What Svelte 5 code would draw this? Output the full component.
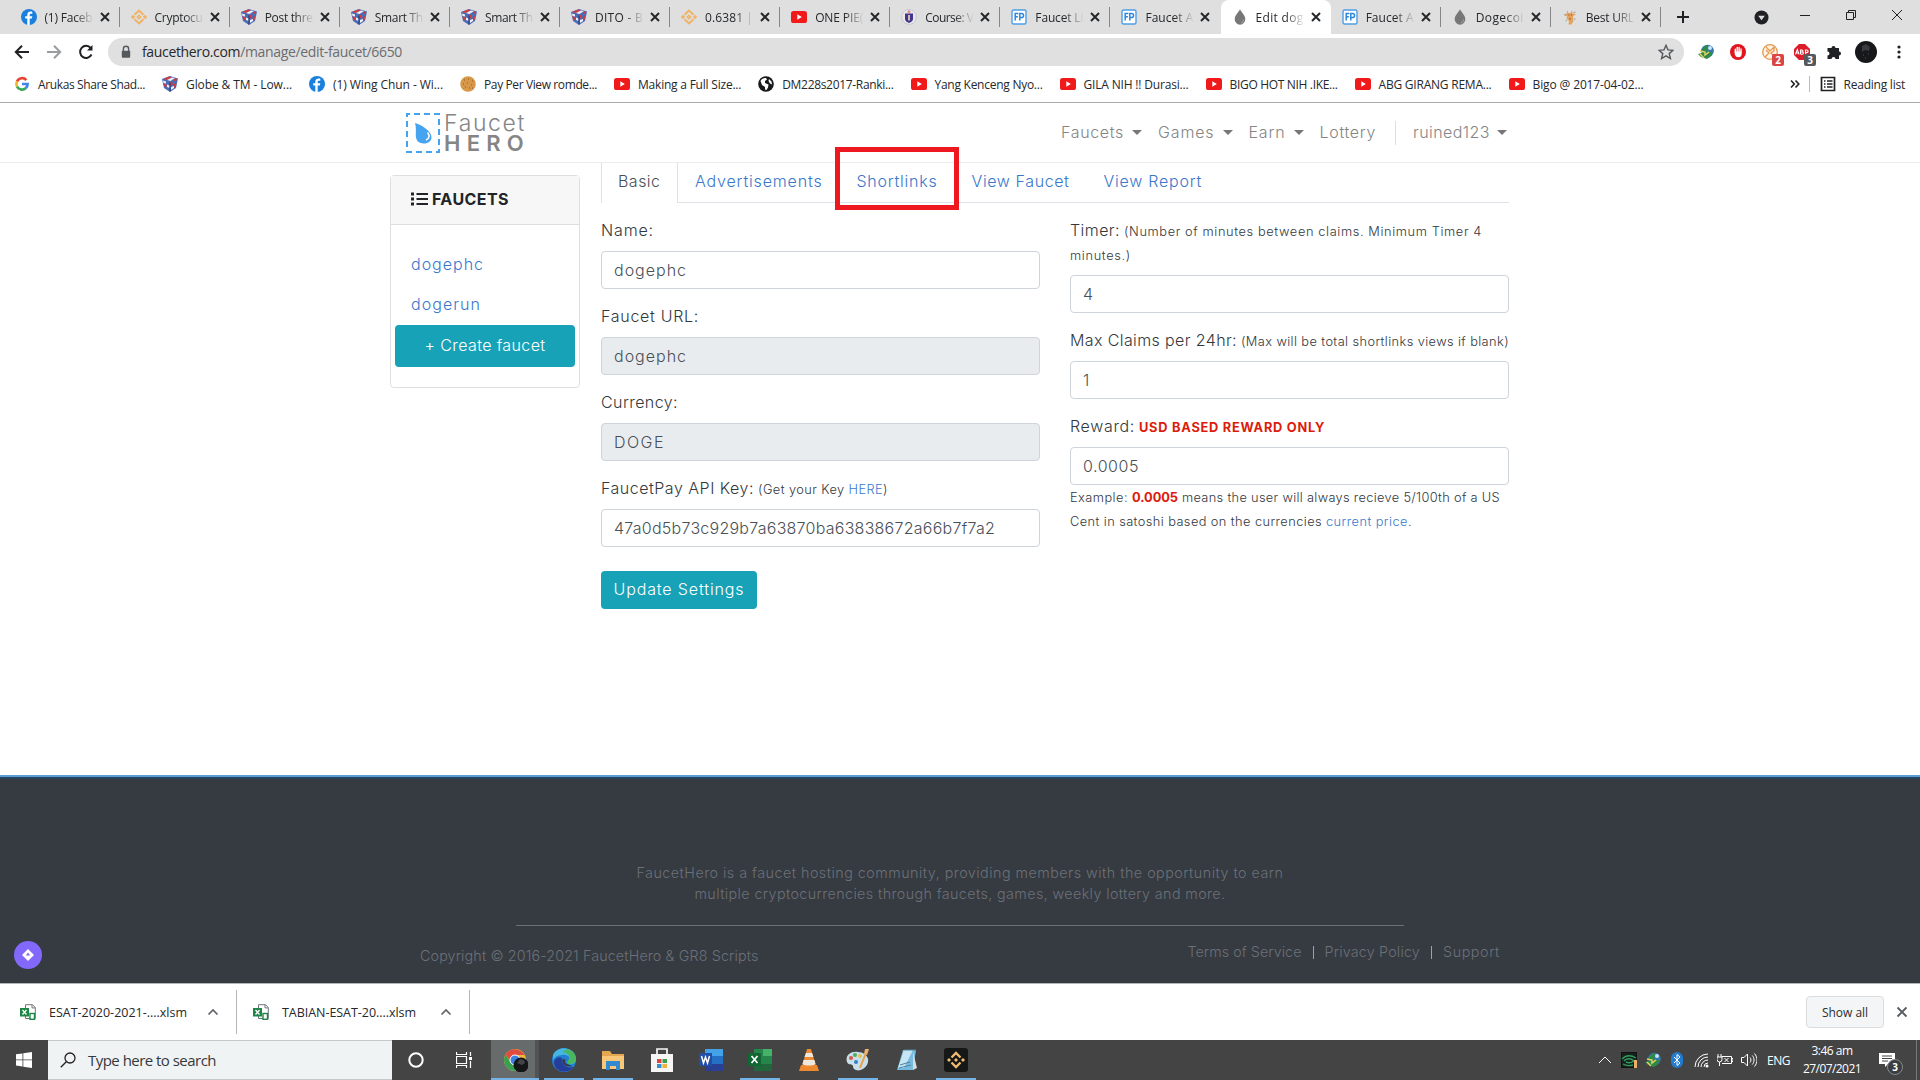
<script>
  const tabs = [
    { icon: 'facebook', title: '(1) Faceb' },
    { icon: 'binance', title: 'Cryptocu' },
    { icon: 'cube', title: 'Post thre' },
    { icon: 'cube', title: 'Smart Th' },
    { icon: 'cube', title: 'Smart Th' },
    { icon: 'cube', title: 'DITO - B' },
    { icon: 'binance', title: '0.6381 |' },
    { icon: 'youtube', title: 'ONE PIE(' },
    { icon: 'school', title: 'Course: V' },
    { icon: 'fp', title: 'Faucet Li' },
    { icon: 'fp', title: 'Faucet A' },
    { icon: 'drop', title: 'Edit dog', active: true },
    { icon: 'fp', title: 'Faucet A' },
    { icon: 'drop', title: 'Dogecoi' },
    { icon: 'giraffe', title: 'Best URL' }
  ];

  const bookmarks = [
    { icon: 'google', title: 'Arukas Share Shad...', width: 107 },
    { icon: 'cube', title: 'Globe & TM - Low...', width: 106 },
    { icon: 'facebook', title: '(1) Wing Chun - Wi...', width: 110 },
    { icon: 'cookie', title: 'Pay Per View romde...', width: 113 },
    { icon: 'youtube', title: 'Making a Full Size...', width: 103.2 },
    { icon: 'globe', title: 'DM228s2017-Ranki...', width: 111.3 },
    { icon: 'youtube', title: 'Yang Kenceng Nyo...', width: 108 },
    { icon: 'youtube', title: 'GILA NIH !! Durasi...', width: 105 },
    { icon: 'youtube', title: 'BIGO HOT NIH .IKE...', width: 108 },
    { icon: 'youtube', title: 'ABG GIRANG REMA...', width: 113 },
    { icon: 'youtube', title: 'Bigo @ 2017-04-02...', width: 111 }
  ];

  const navItems = [
    { label: 'Faucets', width: 63, menu: true },
    { label: 'Games', width: 56.5, menu: true },
    { label: 'Earn', width: 37, menu: true },
    { label: 'Lottery', width: 56.5 }
  ];

  const pageTabs = [
    { label: 'Basic', width: 42.5, active: true },
    { label: 'Advertisements', width: 127.5 },
    { label: 'Shortlinks', width: 81, marked: true },
    { label: 'View Faucet', width: 98 },
    { label: 'View Report', width: 98.5 }
  ];

  const downloads = [
    { name: 'ESAT-2020-2021-....xlsm', width: 138 },
    { name: 'TABIAN-ESAT-20....xlsm', width: 134 }
  ];

  const apps = [
    { icon: 'chrome', open: true, active: true },
    { icon: 'edge', open: true },
    { icon: 'folder', open: true },
    { icon: 'store' },
    { icon: 'word' },
    { icon: 'excel', open: true },
    { icon: 'vlc' },
    { icon: 'paint', open: true },
    { icon: 'notepad' },
    { icon: 'binanceApp', open: true }
  ];

  /**
   * Spread the letters of a text so that it fills the given width
   */
  function fit(node, width) {
    node.style.letterSpacing = '0';
    const natural = node.getBoundingClientRect().width;
    node.style.letterSpacing = (width - natural) / node.textContent.length + 'px';
  }
</script>

{#snippet icon(name)}
  <svg class="icon" viewBox="0 0 16 16">
    {#if name === 'facebook'}
      <circle cx="8" cy="8" r="8" fill="#1b80dd" />
      <path d="M8.700 16V9.600h2.200l.4-2.300H8.700V6c0-.8.4-1.300 1.400-1.300h1.200v-2c-2.800-.5-5 .2-5 3v1.600H4.200v2.300h2.100V16z" fill="#fff" />
    {:else if name === 'binance'}
      <g fill="none" stroke="#efb266" stroke-width="2">
        <path d="M3.500 5.700 8 1.500l4.500 4.200M3.500 10.300 8 14.500l4.500-4.200" />
        <path d="M8 6.300 9.700 8 8 9.700 6.300 8zM2 6.800 3.200 8 2 9.200.8 8zM14 6.800 15.200 8 14 9.200 12.800 8z" stroke-width="1.500" />
      </g>
    {:else if name === 'cube'}
      <path d="m0 3 8-3 8 2.500-2 9.500-6 4-6-4z" fill="#4a6db5" />
      <path d="m1 3 6-2.500 3 1L5 4zM8 6.500l2-1 1 3-3 1.500zM12 8l2.500-1-1 4-2 1zM1.500 7l3 1.500v3L2 10zM12 3l3-.5-.5 2L12 5z" fill="#cf3b45" />
      <path d="m5 4 5-2.500 3 .5-4.500 3zM1 4.500l3 1v2L1.500 7zM9 11l3-1v2l-3 2zM5 8.500l2.500 1v2.500L5 11z" fill="#eef0f6" />
      <path d="M8 6.500v9" stroke="#27366f" />
    {:else if name === 'youtube'}
      <rect y="2" width="16" height="12" rx="2.600" fill="#f01a1a" />
      <path d="m6.300 5.300 4.500 2.700-4.500 2.700z" fill="#fff" />
    {:else if name === 'school'}
      <circle cx="8" cy="8" r="7.300" fill="#e8e8ec" stroke="#b5b6c8" stroke-dasharray="1.500 1" />
      <path d="M4 4.500h8V10c0 2-2 3-4 4-2-1-4-2-4-4z" fill="#40388f" />
      <path d="M7 6h2v5.500H7z" fill="#d9b9ac" />
      <circle cx="8" cy="2.800" r="1.500" fill="#e08c8c" />
    {:else if name === 'fp'}
      <rect x="1" y="1" width="14" height="14" rx="1.500" fill="#fff" stroke="#4d9ee5" stroke-width="1.400" />
      <path d="M4.200 11.500v-7h3.200M4.200 7.800h2.700M8.800 11.500v-7h1.700a2 2 0 0 1 0 4.100H8.800" fill="none" stroke="#2d87dc" stroke-width="1.500" />
    {:else if name === 'drop'}
      <path d="M8 .3c1 2.500 5.300 6 5.300 10A5.300 5.300 0 0 1 8 15.700a5.300 5.300 0 0 1-5.300-5.400C2.700 6.300 7 2.800 8 .3z" fill="#777" />
      <path d="M11.500 10.500c0 2-1 3-2.500 3.500" fill="none" stroke="#aaa" />
    {:else if name === 'giraffe'}
      <path d="m5 1 1.500 3h2L10 1l.5 3.500L14 5l-3 2.500.5 4.500-2 3.500H6.500L7 12 4.500 9.500 5 7.500 2.500 5 5 4.500z" fill="#e5a25c" />
      <path d="m2 5.500 2 1M11.500 3.500l2-.500M5 11l-1.500 1M12 10h1.500" stroke="#879da2" />
      <path d="M6.500 6h1M9 6h1M8 9v1.500" stroke="#76533a" />
    {:else if name === 'google'}
      <g fill="none" stroke-width="2.700">
        <path d="M12.300 4.100A5.600 5.600 0 0 0 3 5.500" stroke="#e64435" />
        <path d="M3 5.500a5.600 5.600 0 0 0 0 5" stroke="#f3b61f" />
        <path d="M3 10.500a5.600 5.600 0 0 0 8.700 1.800" stroke="#35a853" />
        <path d="M11.700 12.300A5.600 5.600 0 0 0 13.600 8H8" stroke="#4285e8" />
      </g>
    {:else if name === 'cookie'}
      <circle cx="8" cy="8" r="7.800" fill="#d89849" />
      <path d="M4 4h1M8 3h1M12 5h1M3 8h1M7 7h1M11 9h1M5 11h1M9 12h1M12 12h1" stroke="#8f5a21" stroke-width="1.200" />
    {:else if name === 'globe'}
      <circle cx="8" cy="8" r="7.800" fill="#18191b" />
      <path d="M2.500 5C4 2.500 6.500 1.500 8 2l1 1.500-2 1.500 0 2 3.500 1.500-.5 3L8.500 14 7 13.500 7 11 4 9zM11 3l2.500 2.500.5 3L12 7.500 10.500 5z" fill="#fff" />
    {:else if name === 'idm'}
      <circle cx="9.500" cy="7" r="6.300" fill="#3876a9" />
      <path d="m3 6 6-5 2 3-3 2 3 2h4l-3 5-3 2-6-2-3-3 4-1z" fill="#2d8b45" />
      <path d="m2 7 5 1v3l4-3M2 10l4 4" fill="none" stroke="#ead16d" stroke-width="1.400" />
      <circle cx="12" cy="4" r="2" fill="#c6e6ff" />
    {:else if name === 'hand'}
      <circle cx="8" cy="8" r="8" fill="#e01520" />
      <path d="M5.300 8V5.300M7.200 8V3.500M9.100 8V3.500M11 8V5" stroke="#fff" stroke-width="1.400" stroke-linecap="round" />
      <path d="M4.600 7.500h7.100V10c0 2-1.200 3.300-3.300 3.300-2.600 0-3.800-2.300-3.800-4.300z" fill="#fff" />
    {:else if name === 'moneta'}
      <circle cx="8" cy="8" r="7.300" fill="#fff5e9" stroke="#e9964b" stroke-width="1.300" />
      <path d="m4 3 4 4 4-4v4l-3 2 4 4M3 13l4-4-3-3" fill="none" stroke="#e9964b" stroke-width="1.300" />
    {:else if name === 'abp'}
      <path d="M5 0h6l5 5v6l-5 5H5l-5-5V5z" fill="#dd1c2b" />
      <path d="m1.500 10.500 1.800-5 1.800 5M2.200 9h2.400M6.500 10V6h1.500a1 1 0 0 1 0 2H6.500h1.800a1 1 0 0 1 0 2.200H6.500M11.500 10.500V6h1.300a1.300 1.300 0 0 1 0 2.600h-1.300" fill="none" stroke="#fff" stroke-width="1.100" />
    {:else if name === 'puzzle'}
      <path d="M1.500 4h4a2 2 0 1 1 4 0H13v3.500a2 2 0 1 1 0 4V15H9.500a2 2 0 0 0-4 0h-4v-3.500a2 2 0 0 0 0-4z" fill="#202124" />
    {:else if name === 'star'}
      <path d="m8 1.300 2 4.600 5 .4-3.800 3.300 1.200 4.900L8 11.900l-4.400 2.600 1.200-4.900L1 6.300l5-.4z" fill="none" stroke="#55585c" stroke-width="1.400" />
    {:else if name === 'lock'}
      <path d="M5 7V4.500a3 3 0 0 1 6 0V7" fill="none" stroke="#55585c" stroke-width="1.600" />
      <rect x="3.200" y="6.500" width="9.600" height="8" rx="1" fill="#55585c" />
    {:else if name === 'close'}
      <path d="m4 4 8 8m0-8-8 8" stroke="#25282b" stroke-width="2" />
    {:else if name === 'xlsm'}
      <path d="M5.500.7h7l2.800 2.800v11H5.500z" fill="#fff" stroke="#71767a" />
      <path d="M12 .7v3.200h3" fill="none" stroke="#71767a" />
      <rect y="4" width="9" height="8.500" fill="#1d8545" />
      <path d="m2.500 6 4 4.500m0-4.500-4 4.500" stroke="#fff" stroke-width="1.300" />
      <rect x="10" y="9.500" width="4.500" height="5.800" fill="#fff" stroke="#1d8545" stroke-width="1.400" />
    {/if}
  </svg>
{/snippet}

{#snippet appIcon(name)}
  <svg class="app-icon" viewBox="0 0 24 24">
    {#if name === 'chrome'}
      <circle cx="11" cy="12" r="11" fill="#f1b83b" />
      <path d="M1.500 6.500A11 11 0 0 1 20.500 7H11L7 14z" fill="#e04a3f" />
      <path d="M1.500 6.500A11 11 0 0 0 11 23l4.500-8H7z" fill="#36a151" />
      <circle cx="11" cy="12" r="5" fill="#3b80e2" stroke="#fff" />
      <circle cx="17" cy="17" r="7.500" fill="#151617" />
      <path d="m13 15 3-4 4 1 1 3-3 2z" fill="#414548" />
    {:else if name === 'edge'}
      <circle cx="12" cy="12" r="12" fill="#247fd2" />
      <path d="M1 7C5-3 23-2 24 11c0 5-5 7-9 4 6-4 1-9-5-8-5 0-8 3-9 5z" fill="#45b6df" />
      <path d="M16 1c8 3 10 10 6 14-3 2-7 1-7-1 4-4 3-9-5-10z" fill="#49b760" />
      <path d="M10 10c-1 5 3 11 12 9-7 8-20 5-20-5 1-4 5-6 8-4z" fill="#263d9b" />
      <path d="M10.500 11c-1 4 2 7.500 8 7.500 3 0 1-1-1-1.500-4-1-5.500-3-4-5.500z" fill="#373942" />
    {:else if name === 'folder'}
      <path d="M1 3h8l2 3h12v15H1z" fill="#e4a64e" />
      <path d="M1 8h22v13H1z" fill="#f8c878" />
      <path d="M5 13h14v9h-4v-4H9v4H5z" fill="#3389d0" />
    {:else if name === 'store'}
      <path d="M7 8V1h10v7" fill="none" stroke="#f7f7f7" stroke-width="1.700" />
      <path d="M1 6h22v18H1z" fill="#f5f5f5" />
      <path d="M7 11h4.500v4H7z" fill="#df4540" /><path d="M12.500 11H17v4h-4.500z" fill="#3f9e4c" />
      <path d="M7 16h4.500v4H7z" fill="#3392ce" /><path d="M12.500 16H17v4h-4.500z" fill="#efb23e" />
    {:else if name === 'word'}
      <path d="M6 1h18v7H6z" fill="#43a2e8" /><path d="M6 8h18v8H6z" fill="#2470c5" /><path d="M6 16h18v7H6z" fill="#293f93" />
      <path d="M0 5h13v13H0z" fill="#234ea6" />
      <path d="m2.500 8 2 7 2-6 2 6 2-7" fill="none" stroke="#fff" stroke-width="1.500" />
    {:else if name === 'excel'}
      <path d="M6 1h18v22H6z" fill="#26854a" /><path d="M15 1h9v7h-9z" fill="#45b268" /><path d="M6 16h18v7H6z" fill="#20673c" />
      <path d="M0 5h13v13H0z" fill="#126632" />
      <path d="m3.500 8 6 7m0-7-6 7" stroke="#fff" stroke-width="1.700" />
    {:else if name === 'vlc'}
      <path d="m4 17-2 6h20l-2-6z" fill="#ed892e" />
      <path d="M10 1h4l5 17c-3 2-11 2-14 0z" fill="#ef8b32" />
      <path d="M9 5h6l1.500 4h-9zM6.500 12h11l1 4c-3 2-10 2-13 0z" fill="#eee8df" />
    {:else if name === 'paint'}
      <path d="M12 4C4 3-1 8 1 14c2 4 5 1 6 4 0 6 10 6 14-1 4-8-3-13-9-13z" fill="#c9dfea" />
      <circle cx="5" cy="10" r="2" fill="#d65846" /><circle cx="9" cy="7" r="2" fill="#4cae68" /><circle cx="14" cy="8" r="2" fill="#e8bf4b" /><circle cx="10" cy="14" r="2" fill="#397fc2" />
      <path d="m20 5-6 15" stroke="#e4a14e" stroke-width="2" /><path d="M19 1h4l-2 6-3-1z" fill="#edb16c" />
    {:else if name === 'notepad'}
      <path d="M8 2h13l-3 20H2z" fill="#79bbdf" /><path d="M9 2h9L9 20H3z" fill="#c7e6f3" />
      <path d="m18 4 4 16-4 2" fill="#d9dadb" /><path d="M9 2h12M5 17l10-3M4 20l12-3" stroke="#4b829e" />
    {:else if name === 'binanceApp'}
      <rect width="24" height="24" rx="3" fill="#161817" />
      <path d="m7.500 9.500 4.500-4.500 4.500 4.500M7.500 14.500 12 19l4.500-4.500" fill="none" stroke="#f3bc70" stroke-width="2.300" />
      <path d="m12 10 2 2-2 2-2-2zM5 10l2 2-2 2-2-2zM19 10l2 2-2 2-2-2z" fill="#f3bc70" />
    {/if}
  </svg>
{/snippet}

<div class="screen">
  <div class="tab-strip">
    {#each tabs as tab}
      <div class="tab" class:active={tab.active}>
        {@render icon(tab.icon)}
        <span class="tab-title"><span use:fit={48}>{tab.title}</span></span>
        {@render icon('close')}
      </div>
    {/each}
    <svg class="new-tab" viewBox="0 0 16 16"><path d="M8 2v12M2 8h12" stroke="#202124" stroke-width="2" /></svg>
    <svg class="tab-search" viewBox="0 0 16 16"><circle cx="8" cy="8" r="7.500" fill="#202124" /><path d="M4.500 6h7L8 11z" fill="#ddd" /></svg>
    <div class="window-controls">
      <svg viewBox="0 0 12 12"><path d="M1 6.500h10" /></svg>
      <svg viewBox="0 0 12 12"><path d="M1.500 3.500h7v7h-7zM3.500 3.500v-2h7v7h-2" /></svg>
      <svg viewBox="0 0 12 12"><path d="m1 1 10 10m0-10L1 11" /></svg>
    </div>
  </div>

  <div class="toolbar">
    <div class="history">
      <svg viewBox="0 0 16 16"><path d="M15 8H2m6-6.200L1.800 8 8 14.200" stroke="#202124" /></svg>
      <svg viewBox="0 0 16 16"><path d="M1 8h13M8 1.800 14.200 8 8 14.200" stroke="#9a9da0" /></svg>
      <svg viewBox="0 0 16 16"><path d="M13.500 10.500A6 6 0 1 1 12.700 4" stroke="#202124" /><path d="M14.500 1v5.500H9z" fill="#202124" stroke="none" /></svg>
    </div>
    <div class="address">
      {@render icon('lock')}
      <span class="url" use:fit={260}>faucethero.com<span class="path">/manage/edit-faucet/6650</span></span>
      {@render icon('star')}
    </div>
    <div class="extensions">
      {@render icon('idm')}
      {@render icon('hand')}
      <span class="ext">{@render icon('moneta')}<b class="badge red">2</b></span>
      <span class="ext">{@render icon('abp')}<b class="badge">3</b></span>
      {@render icon('puzzle')}
    </div>
    <svg class="avatar" viewBox="0 0 22 22"><circle cx="11" cy="11" r="11" fill="#17181a" /><path d="m7 5 4-2 4 3-1 4-4-1-3 2z" fill="#393b3e" /><path d="M8 14h1m4-1h1m-4 4h1" stroke="#4e5154" /></svg>
    <svg class="dots" viewBox="0 0 4 16"><circle cx="2" cy="3" r="1.600" /><circle cx="2" cy="8" r="1.600" /><circle cx="2" cy="13" r="1.600" /></svg>
  </div>

  <div class="bookmarks">
    {#each bookmarks as bookmark}
      <div class="bookmark">
        {@render icon(bookmark.icon)}
        <span use:fit={bookmark.width}>{bookmark.title}</span>
      </div>
    {/each}
    <div class="reading">
      <svg class="more" viewBox="0 0 10 10"><path d="m1 1.500 3.300 3.500L1 8.500m4.500-7L8.800 5 5.500 8.500" /></svg>
      <i></i>
      <svg class="list" viewBox="0 0 16 16"><path d="M1.500 1.500h13v13h-13zM4 5h1.500M7 5h5.500M4 8h1.500M7 8h5.500M4 11h1.500M7 11h5.500" /></svg>
      <span use:fit={61.5}>Reading list</span>
    </div>
  </div>

  <main>
    <header>
      <div class="logo">
        <svg viewBox="0 0 34 40">
          <rect x="1" y="1" width="32" height="38" fill="none" stroke="#46a3f0" stroke-width="2" stroke-dasharray="6 4" stroke-dashoffset="3" />
          <path d="M9 10c5 1 17 8 16.500 14.500-.3 3.500-3 6-7.500 6-6 0-8.500-4-8.200-9C10 17 10 13 9 10z" fill="#46a3f0" />
          <path d="M21.500 19.500c2.500 3 2 6-1.500 7.500" fill="none" stroke="#fff" stroke-width="1.500" />
        </svg>
        <div class="wordmark">
          <span use:fit={82}>Faucet</span>
          <b use:fit={86}>HERO</b>
        </div>
      </div>
      <nav>
        {#each navItems as item}
          <div class="nav-item">
            <span use:fit={item.width}>{item.label}</span>
            {#if item.menu}<i class="caret"></i>{/if}
          </div>
        {/each}
        <div class="nav-item user">
          <span use:fit={77}>ruined123</span>
          <i class="caret"></i>
        </div>
      </nav>
    </header>

    <div class="content">
      <aside>
        <div class="card-header">
          <svg viewBox="0 0 17 14"><path d="M5.500 2H17M5.500 7H17M5.500 12H17" stroke="#212529" stroke-width="2" /><path d="M0 2h3M0 7h3M0 12h3" stroke="#212529" stroke-width="3" /></svg>
          <b use:fit={77}>FAUCETS</b>
        </div>
        <div class="card-body">
          <a href="#dogephc"><span use:fit={73}>dogephc</span></a>
          <a href="#dogerun"><span use:fit={70}>dogerun</span></a>
          <button class="create"><span use:fit={121}>+ Create faucet</span></button>
        </div>
      </aside>

      <section>
        <div class="page-tabs">
          {#each pageTabs as tab}
            <div class="page-tab" class:active={tab.active} class:marked={tab.marked}>
              <span use:fit={tab.width}>{tab.label}</span>
            </div>
          {/each}
        </div>

        <div class="form">
          <div class="column">
            <div class="group">
              <div class="label"><span use:fit={53}>Name:</span></div>
              <div class="input"><span use:fit={73}>dogephc</span></div>
            </div>
            <div class="group">
              <div class="label"><span use:fit={98}>Faucet URL:</span></div>
              <div class="input disabled"><span use:fit={73}>dogephc</span></div>
            </div>
            <div class="group">
              <div class="label"><span use:fit={77}>Currency:</span></div>
              <div class="input disabled"><span use:fit={51}>DOGE</span></div>
            </div>
            <div class="group">
              <div class="label">
                <span use:fit={153}>FaucetPay API Key:</span>
                <small use:fit={130}>(Get your Key <a href="#key">HERE</a>)</small>
              </div>
              <div class="input"><span use:fit={381}>47a0d5b73c929b7a63870ba63838672a66b7f7a2</span></div>
            </div>
            <button class="update"><span use:fit={131}>Update Settings</span></button>
          </div>

          <div class="column">
            <div class="group">
              <div class="label">
                <span use:fit={50}>Timer:</span>
                <small use:fit={358}>(Number of minutes between claims. Minimum Timer 4</small>
              </div>
              <div class="label second"><small use:fit={61}>minutes.)</small></div>
              <div class="input"><span>4</span></div>
            </div>
            <div class="group">
              <div class="label">
                <span use:fit={167}>Max Claims per 24hr:</span>
                <small use:fit={268}>(Max will be total shortlinks views if blank)</small>
              </div>
              <div class="input"><span>1</span></div>
            </div>
            <div class="group">
              <div class="label">
                <span use:fit={65}>Reward:</span>
                <small class="warn" use:fit={186}>USD BASED REWARD ONLY</small>
              </div>
              <div class="input"><span use:fit={56}>0.0005</span></div>
              <div class="hint">
                <span use:fit={58}>Example:</span>
                <b class="warn" use:fit={46}>0.0005</b>
                <span use:fit={318}>means the user will always recieve 5/100th of a US</span>
              </div>
              <div class="hint">
                <span use:fit={252}>Cent in satoshi based on the currencies</span>
                <span use:fit={86}><a href="#price">current price</a>.</span>
              </div>
            </div>
          </div>
        </div>
      </section>
    </div>

    <footer>
      <div class="about">
        <span use:fit={647}>FaucetHero is a faucet hosting community, providing members with the opportunity to earn</span>
        <span use:fit={531}>multiple cryptocurrencies through faucets, games, weekly lottery and more.</span>
      </div>
      <hr />
      <div class="legal">
        <span class="copyright" use:fit={338.5}>Copyright © 2016-2021 FaucetHero &amp; GR8 Scripts</span>
        <div class="links">
          <span use:fit={114}>Terms of Service</span>
          <i></i>
          <span use:fit={95.5}>Privacy Policy</span>
          <i></i>
          <span use:fit={57}>Support</span>
        </div>
      </div>
      <svg class="widget" viewBox="0 0 28 28"><circle cx="14" cy="14" r="14" fill="#8268fb" /><path d="m14 8 6 6-6 6-6-6z" fill="#fff" /><path d="m14 11.500 2.200 3h-4.400z" fill="#8268fb" /></svg>
    </footer>
  </main>

  <div class="downloads">
    {#each downloads as file}
      <div class="download">
        {@render icon('xlsm')}
        <span use:fit={file.width}>{file.name}</span>
        <svg class="chevron" viewBox="0 0 12 8"><path d="m1.500 6.500 4.500-4.500 4.500 4.500" /></svg>
      </div>
    {/each}
    <button class="show-all"><span use:fit={46}>Show all</span></button>
    <svg class="dismiss" viewBox="0 0 12 12"><path d="m1.500 1.500 9 9m0-9-9 9" /></svg>
  </div>

  <div class="taskbar">
    <svg class="start" viewBox="0 0 16 16"><path d="m0 2.300 6.500-.9v6.100H0zM7.300 1.300 16 0v7.500H7.300zM0 8.300h6.500v6.200L0 13.600zM7.300 8.300H16V16l-8.700-1.300z" fill="#fff" /></svg>
    <div class="search">
      <svg viewBox="0 0 16 16"><circle cx="10" cy="6" r="5" /><path d="M6.500 9.500.8 15.200" /></svg>
      <span use:fit={128}>Type here to search</span>
    </div>
    <svg class="cortana" viewBox="0 0 16 16"><circle cx="8" cy="8" r="6.700" /></svg>
    <svg class="task-view" viewBox="0 0 16 16"><path d="M.5 0v2.500h10V0M.5 16v-2.500h10V16M.5 4.500h10v7H.5zM14.500 0v4M14.500 9v7" /><path d="M13 5h3v3h-3z" fill="#fff" stroke="none" /></svg>
    <div class="apps">
      {#each apps as app}
        <div class="app" class:open={app.open} class:current={app.active}>
          {@render appIcon(app.icon)}
        </div>
      {/each}
    </div>
    <div class="tray">
      <svg viewBox="0 0 16 16"><path d="m2 11 6-6 6 6" /></svg>
      <svg viewBox="0 0 16 16"><rect x=".5" y=".5" width="15" height="15" fill="#17201c" stroke="#111" /><path d="M1 7c4-4 9-4 14-1M3 9c2-3 7-3 10 0-3 2-6 2-8 1M2 12c3 2 6 2 10 1" stroke="#309b5d" stroke-width="1.400" /><path d="M13 8h3v8h-3z" fill="#edae6e" stroke="none" /></svg>
      {@render icon('idm')}
      <svg viewBox="0 0 16 16"><rect x="2" width="12" height="16" rx="6" fill="#217bd1" stroke="none" /><path d="m5 5 6 6-3 2.500v-11L11 5l-6 6" /></svg>
      <svg viewBox="0 0 16 16"><path d="M2 15A13 13 0 0 1 15 2M5 15A10 10 0 0 1 15 5M8 15a7 7 0 0 1 7-7M11 15a4 4 0 0 1 4-4" /><circle cx="14" cy="14" r="1.500" fill="#fff" stroke="none" /></svg>
      <svg viewBox="0 0 16 16"><path d="M5 4.500h9.500v7H5M14.500 6.500h1.500v3h-1.500M7.500 6l4 4m0-4-4 4M1 2v3m3-3v3M0 5h5v2.500a2.500 2.500 0 0 1-5 0zM2.500 10v4" /></svg>
      <svg viewBox="0 0 16 16"><path d="M.5 5.500H3L6.500 2v12L3 10.500H.5zM9 5.500c1.300 1.500 1.300 3.500 0 5M11.300 3.500c2.300 2.600 2.300 6.400 0 9M13.500 1.500c3.300 4 3.300 9 0 13" /></svg>
      <span class="lang" use:fit={23}>ENG</span>
      <div class="clock">
        <span use:fit={41}>3:46 am</span>
        <span use:fit={58}>27/07/2021</span>
      </div>
      <div class="notifications">
        <svg viewBox="0 0 16 16"><path d="M0 1h16v11H9l-3 3v-3H0z" fill="#fff" stroke="none" /><path d="M3 4h10M3 6.500h10M3 9h6" stroke="#434443" /></svg>
        <b>3</b>
      </div>
      <i class="peek"></i>
    </div>
  </div>
</div>

<style>
  .screen {
    display: flex;
    flex-direction: column;
    width: 1920px;
    height: 1080px;
    overflow: hidden;
    background: #fff;
    color: #26282b;
    font-family: "Open Sans", "Noto Sans", sans-serif;
    font-size: 12px;
    white-space: nowrap;
  }

  .screen *,
  .screen *::after,
  .screen {
    box-sizing: border-box;
  }

  svg {
    display: block;
    flex: none;
    fill: none;
  }

  a {
    color: #3977cb;
    text-decoration: none;
  }

  button {
    padding: 0;
    border: 0;
    font: inherit;
  }

  .icon {
    width: 16px;
    height: 16px;
  }

  /* browser chrome */
  .tab-strip {
    display: flex;
    align-items: center;
    height: 34px;
    padding-left: 9.5px;
    background: #dfdfdf;
  }

  .tab {
    position: relative;
    display: flex;
    align-items: center;
    width: 110.1px;
    height: 34px;
    padding-left: 11px;
    flex: none;
  }

  .tab::after {
    content: '';
    position: absolute;
    right: 0;
    top: 7px;
    width: 1px;
    height: 20px;
    background: #85878a;
  }

  .tab.active {
    background: #fff;
    border-radius: 8px 8px 0 0;
  }

  .tab.active::after,
  .tab:has(+ .active)::after {
    display: none;
  }

  .tab-title {
    width: 49px;
    margin: 0 3px 0 8px;
    mask-image: linear-gradient(to right, #000 60%, transparent);
  }

  .new-tab {
    width: 16px;
    height: 16px;
    margin-left: 14px;
  }

  .tab-search {
    width: 15px;
    height: 15px;
    margin-left: 63px;
  }

  .window-controls {
    display: flex;
    gap: 34px;
    margin: -5px 17px 0 auto;
  }

  .window-controls svg {
    width: 12px;
    height: 12px;
    stroke: #202124;
  }

  .toolbar {
    display: flex;
    align-items: center;
    height: 36px;
  }

  .history {
    display: flex;
    gap: 16px;
    width: 108px;
    padding-left: 14px;
  }

  .history svg {
    width: 16px;
    height: 16px;
    stroke-width: 2;
  }

  .address {
    display: flex;
    align-items: center;
    width: 1576px;
    height: 28px;
    padding: 0 10px;
    border-radius: 14px;
    background: #e0e0e0;
  }

  .address .icon:last-child {
    margin-left: auto;
  }

  .address .icon:first-child {
    width: 14px;
    margin: 0 9px 0 1px;
  }

  .url {
    padding-bottom: 1px;
    font-size: 14px;
  }

  .path {
    color: #6a6c6f;
  }

  .extensions {
    display: flex;
    gap: 16px;
    margin-left: 14px;
  }

  .ext {
    position: relative;
  }

  .badge {
    position: absolute;
    left: 10px;
    top: 10px;
    width: 12px;
    height: 12px;
    border-radius: 2px;
    background: #55595d;
    color: #fff;
    font-size: 10px;
    line-height: 12px;
    text-align: center;
  }

  .badge.red {
    background: #dc4545;
  }

  .avatar {
    width: 22px;
    height: 22px;
    margin-left: 13px;
  }

  .dots {
    width: 4px;
    height: 16px;
    margin-left: 20px;
    fill: #202124;
  }

  .bookmarks {
    display: flex;
    align-items: center;
    gap: 17px;
    height: 33px;
    padding: 0 15px 4px 14px;
    border-bottom: 1px solid #a9abad;
  }

  .bookmark {
    display: flex;
    align-items: center;
    gap: 8px;
  }

  .reading {
    display: flex;
    align-items: center;
    margin-left: auto;
  }

  .more {
    width: 10px;
    height: 10px;
    stroke: #202124;
    stroke-width: 1.6;
  }

  .reading i {
    width: 1px;
    height: 16px;
    margin: 0 10px 0 9px;
    background: #b9bbbd;
  }

  .list {
    width: 16px;
    height: 16px;
    margin-right: 8px;
    stroke: #202124;
    stroke-width: 1.7;
  }

  /* web page */
  main {
    display: flex;
    flex-direction: column;
    height: 880px;
    color: #33383d;
    font-family: Inter, "Open Sans", sans-serif;
    font-size: 16px;
    font-weight: 300;
  }

  header {
    display: flex;
    align-items: center;
    justify-content: space-between;
    height: 60px;
    padding: 0 413px 0 406px;
    border-bottom: 1px solid #ececec;
    color: #858585;
  }

  .logo {
    display: flex;
    align-items: center;
    gap: 4px;
  }

  .logo svg {
    width: 34px;
    height: 40px;
  }

  .wordmark {
    display: flex;
    flex-direction: column;
    align-items: flex-start;
    font-size: 23px;
    line-height: 20px;
  }

  .wordmark b {
    font-size: 22px;
    font-weight: 600;
  }

  nav {
    display: flex;
    align-items: center;
    gap: 16px;
  }

  .nav-item {
    display: flex;
    align-items: center;
    gap: 8px;
  }

  .nav-item span {
    padding-bottom: 2px;
  }

  .nav-item.user {
    height: 24px;
    margin-left: 3px;
    padding-left: 17px;
    gap: 7px;
    border-left: 1px solid #dedede;
  }

  .caret {
    border: 5px solid transparent;
    border-top-color: #777;
    border-bottom: 0;
  }

  .content {
    display: flex;
    align-items: flex-start;
    gap: 21px;
    height: 612px;
    padding-left: 390px;
  }

  aside {
    width: 190px;
    height: 213px;
    margin-top: 12px;
    border: 1px solid #dfdfdf;
    border-radius: 4px;
  }

  .card-header {
    display: flex;
    align-items: center;
    gap: 4px;
    height: 49px;
    padding: 0 0 2px 20px;
    border-bottom: 1px solid #dfdfdf;
    background: #f7f7f7;
    color: #212529;
  }

  .card-header svg {
    width: 17px;
    height: 14px;
  }

  .card-header b {
    font-weight: 700;
  }

  .card-body {
    display: flex;
    flex-direction: column;
    padding: 20px 4px 0;
  }

  .card-body a {
    height: 40px;
    padding-left: 16px;
    line-height: 38px;
  }

  .create {
    height: 42px;
    padding-bottom: 2px;
    border-radius: 4px;
    background: #17a2b8;
    color: #fff;
  }

  section {
    width: 908px;
  }

  .page-tabs {
    display: flex;
    height: 40px;
    border-bottom: 1px solid #dee2e6;
    color: #3977cb;
  }

  .page-tab {
    position: relative;
    height: 40px;
    padding: 0 17px;
    line-height: 37px;
  }

  .page-tab.active {
    padding: 0 16.5px 0 16px;
    border: 1px solid #dee2e6;
    border-width: 0 1px;
    background: #fff;
    color: #495057;
  }

  /* frame drawn over the highlighted tab */
  .page-tab.marked::after {
    content: '';
    position: absolute;
    left: -5px;
    top: -16px;
    width: 124px;
    height: 63px;
    border: 5px solid #ed1820;
  }

  .form {
    display: flex;
    gap: 30px;
    padding-top: 16px;
  }

  .column {
    width: 439px;
  }

  .group {
    margin-bottom: 16px;
  }

  .label {
    display: flex;
    align-items: baseline;
    gap: 4px;
    height: 24px;
    margin-bottom: 8px;
    line-height: 22px;
  }

  .label:has(+ .second) {
    margin-bottom: 0;
  }

  .label.second {
    line-height: 25px;
  }

  small,
  .hint {
    font-size: 12.8px;
  }

  .input {
    height: 38px;
    padding: 0 12px;
    border: 1px solid #ced4da;
    border-radius: 4px;
    color: #495057;
    line-height: 37px;
  }

  .input.disabled {
    background: #e9ecef;
  }

  .hint {
    display: flex;
    gap: 4px;
    height: 24px;
    line-height: 26px;
  }

  .warn {
    color: #dc1c0c;
    font-weight: 700;
  }

  .update {
    width: 156px;
    height: 38px;
    margin-top: 8px;
    padding-bottom: 2px;
    border-radius: 4px;
    background: #17a2b8;
    color: #fff;
  }

  footer {
    position: relative;
    height: 208px;
    padding-top: 85px;
    border-top: 2px solid #5b9fd4;
    background: #363a41;
    box-shadow: inset 0 2px #244562;
    color: #6b7178;
    font-size: 14.3px;
  }

  .about {
    display: flex;
    flex-direction: column;
    align-items: center;
    line-height: 21px;
  }

  hr {
    width: 888px;
    height: 1px;
    margin: 21px auto 0;
    border: 0;
    background: #6b7077;
  }

  .legal {
    display: flex;
    align-items: flex-start;
    justify-content: space-between;
    padding: 16px 420px 0;
    line-height: 20px;
  }

  .copyright {
    margin-top: 4px;
  }

  .links {
    display: flex;
    align-items: center;
  }

  .links i {
    width: 1px;
    height: 13px;
    margin: 0 11px;
    background: #9da1a5;
  }

  .widget {
    position: absolute;
    left: 14px;
    bottom: 14px;
    width: 28px;
    height: 28px;
  }

  /* download shelf */
  .downloads {
    display: flex;
    align-items: center;
    height: 57px;
    border-top: 1px solid #b4b6b8;
  }

  .download {
    display: flex;
    align-items: center;
    width: 237px;
    height: 44px;
    padding: 0 17px 0 20px;
    border-right: 1px solid #b4b6b8;
  }

  .download + .download {
    width: 233px;
    padding-left: 16px;
  }

  .download span {
    margin-left: 13px;
    font-size: 12.5px;
  }

  .chevron {
    width: 12px;
    height: 8px;
    margin-left: auto;
    stroke: #5f6368;
    stroke-width: 1.7;
  }

  .show-all {
    width: 78px;
    height: 32px;
    margin-left: auto;
    border: 1px solid #dadcdd;
    border-radius: 4px;
    background: #f4f5f6;
    color: #2b2e31;
  }

  .dismiss {
    width: 12px;
    height: 12px;
    margin: 0 12px;
    stroke: #5a5d61;
    stroke-width: 1.8;
  }

  /* taskbar */
  .taskbar {
    display: flex;
    align-items: center;
    height: 40px;
    background: #434443;
    color: #fff;
  }

  .start {
    width: 16px;
    height: 16px;
    margin: 0 16px;
  }

  .search {
    display: flex;
    align-items: center;
    gap: 12px;
    width: 344px;
    height: 40px;
    padding-left: 12px;
    border: 1px solid #c6c9ca;
    border-width: 1px 0;
    background: #f0f3f4;
    color: #36393b;
    font-size: 15px;
  }

  .search svg {
    width: 16px;
    height: 16px;
    stroke: #222;
    stroke-width: 1.3;
  }

  .cortana {
    width: 16px;
    height: 16px;
    margin: 0 16px;
    stroke: #fff;
    stroke-width: 2;
  }

  .task-view {
    width: 16px;
    height: 16px;
    margin: 0 18px 0 16px;
    stroke: #fff;
    stroke-width: 1.2;
  }

  .apps {
    display: flex;
    gap: 1px;
    margin-left: 1px;
  }

  .app {
    display: flex;
    align-items: center;
    justify-content: center;
    position: relative;
    width: 48px;
    height: 40px;
  }

  .app-icon {
    width: 24px;
    height: 24px;
  }

  .app.open::after {
    content: '';
    position: absolute;
    left: 4px;
    right: 4px;
    bottom: 0;
    height: 2px;
    background: #74b4e6;
  }

  .app.current {
    padding-left: 2px;
    background: linear-gradient(to right, #686b6c 44px, #505456 44px);
  }

  .app.current::after {
    left: 0;
    right: 0;
  }

  .tray {
    display: flex;
    align-items: center;
    gap: 8px;
    height: 40px;
    margin-left: auto;
  }

  .tray svg {
    width: 16px;
    height: 16px;
    stroke: #fff;
  }

  .tray .icon {
    stroke: none;
  }

  .lang {
    margin-left: 2px;
  }

  .clock {
    display: flex;
    flex-direction: column;
    align-items: center;
    margin-left: 5px;
    line-height: 18px;
  }

  .notifications {
    position: relative;
    margin-left: 10px;
  }

  .notifications b {
    position: absolute;
    left: 8px;
    top: 7px;
    width: 16px;
    height: 16px;
    border: 1px solid #85898c;
    border-radius: 50%;
    background: #3b3e40;
    font-size: 10px;
    line-height: 14px;
    text-align: center;
  }

  .peek {
    width: 4px;
    height: 40px;
    margin-left: 13px;
    border-left: 1px solid #777a7b;
  }
</style>
